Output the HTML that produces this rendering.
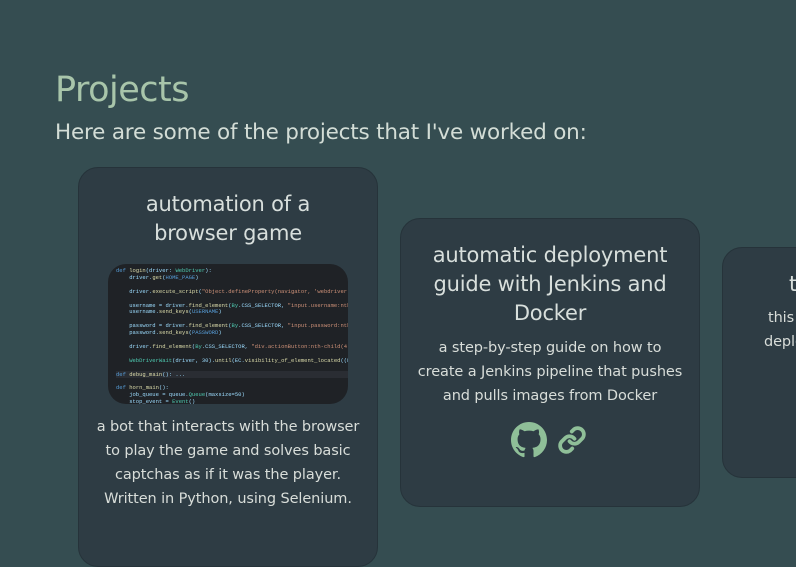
<!DOCTYPE html>
<html><head><style>
body{margin:0;width:796px;height:542px;overflow:hidden;background:#354d51;font-family:"DejaVu Sans","Liberation Sans",sans-serif;position:relative}
h1{position:absolute;left:55px;top:70px;margin:0;font-weight:normal;font-size:35px;color:#a8c5aa;letter-spacing:-0.5px}
.sub{position:absolute;left:55px;top:120px;font-size:21.5px;color:#d3ddd6;letter-spacing:-0.2px}
.card{position:absolute;width:300px;background:#2e3c44;border:1px solid #26333a;border-radius:20px;box-sizing:border-box;text-align:center;color:#d8ddd9;overflow:hidden}
.t{font-size:21px;line-height:29px;color:#d8dfdc;letter-spacing:-0.2px}
.d{font-size:14.5px;line-height:24px;letter-spacing:-0.1px}
.img{margin:16px auto 0;width:240px;height:140px;border-radius:18px;background:#1f2226;overflow:hidden;text-align:left;font-family:"Liberation Mono",monospace;font-size:5.5px;line-height:6.9px;color:#9cdcfe;padding:4px 0 0 8px;box-sizing:border-box;white-space:pre}
.img span{line-height:6.9px}
.y{color:#dcdcaa}.s{color:#ce9178}.g{color:#4ec9b0}.k{color:#569cd6}
</style></head><body>
<h1>Projects</h1>
<div class="sub">Here are some of the projects that I've worked on:</div>
<div class="card" style="left:78px;top:167px;height:400px;padding-top:22px">
<div class="t">automation of a<br>browser game</div>
<div class="img"><span class="k">def</span> <span class="y">login</span>(driver: <span class="g">WebDriver</span>):
    driver.<span class="y">get</span>(<span class="k">HOME_PAGE</span>)

    driver.<span class="y">execute_script</span>(<span class="s">"Object.defineProperty(navigator, 'webdriver', {get: () =&gt; undef</span>

    username = driver.<span class="y">find_element</span>(<span class="g">By</span>.CSS_SELECTOR, <span class="s">"input.username:nth-child(2)"</span>)
    username.<span class="y">send_keys</span>(<span class="k">USERNAME</span>)

    password = driver.<span class="y">find_element</span>(<span class="g">By</span>.CSS_SELECTOR, <span class="s">"input.password:nth-child(2)"</span>)
    password.<span class="y">send_keys</span>(<span class="k">PASSWORD</span>)

    driver.<span class="y">find_element</span>(<span class="g">By</span>.CSS_SELECTOR, <span class="s">"div.actionButton:nth-child(4)"</span>).<span class="y">click</span>()

    <span class="g">WebDriverWait</span>(driver, 30).<span class="y">until</span>(EC.<span class="y">visibility_of_element_located</span>((By.CSS_SELECTOR, <span class="s">".a</span>

<span style="background:#2a2d33"><span class="k">def</span> <span class="y">debug_main</span>(): ...                                                                          </span>

<span class="k">def</span> <span class="y">horn_main</span>():
    job_queue = queue.<span class="g">Queue</span>(maxsize=50)
    stop_event = <span class="g">Event</span>()</div>
<div class="d" style="margin-top:11px">a bot that interacts with the browser<br>to play the game and solves basic<br>captchas as if it was the player.<br>Written in Python, using Selenium.</div>
</div>
<div class="card" style="left:400px;top:218px;height:289px;padding-top:22px">
<div class="t">automatic deployment<br>guide with Jenkins and<br>Docker</div>
<div class="d" style="margin-top:8px">a step-by-step guide on how to<br>create a Jenkins pipeline that pushes<br>and pulls images from Docker</div>
<div style="margin-top:14px">
<svg width="36" height="36" viewBox="0 0 16 16" style="vertical-align:middle"><path fill="#8fbf98" d="M8 0C3.58 0 0 3.58 0 8c0 3.54 2.29 6.530 5.47 7.59.4.07.55-.17.55-.38 0-.19-.01-.82-.01-1.49-2.01.37-2.53-.49-2.69-.94-.09-.23-.48-.94-.82-1.13-.28-.15-.68-.52-.01-.53.63-.01 1.08.58 1.23.82.72 1.21 1.87.87 2.33.66.07-.52.28-.87.51-1.07-1.78-.2-3.64-.89-3.64-3.95 0-.87.31-1.59.82-2.15-.08-.2-.36-1.02.08-2.12 0 0 .67-.21 2.2.82.64-.18 1.32-.27 2-.27.68 0 1.36.09 2 .27 1.53-1.04 2.2-.82 2.2-.82.44 1.1.16 1.92.08 2.12.51.56.82 1.27.82 2.15 0 3.07-1.87 3.75-3.65 3.95.29.25.54.73.54 1.48 0 1.07-.01 1.93-.01 2.2 0 .21.15.46.55.38A8.013 8.013 0 0016 8c0-4.42-3.58-8-8-8z"/></svg>
<svg width="34" height="30" viewBox="0 0 24 24" style="vertical-align:middle;margin-left:2px"><g fill="none" stroke="#8fbf98" stroke-width="3" stroke-linecap="round"><path d="M10 13a5 5 0 0 0 7.5.5l3-3a5 5 0 0 0-7-7l-1.7 1.7"/><path d="M14 11a5 5 0 0 0-7.5-.5l-3 3a5 5 0 0 0 7 7l1.7-1.7"/></g></svg>
</div>
</div>
<div class="card" style="left:722px;top:247px;width:90px;height:231px;border-radius:20px 0 0 20px">
<div class="t" style="position:absolute;left:66px;top:22px">t</div>
<div class="d" style="position:absolute;left:45px;top:58px;text-align:left;white-space:nowrap">this<br><span style="margin-left:-4px">deplo</span></div>
</div>
</body></html>
